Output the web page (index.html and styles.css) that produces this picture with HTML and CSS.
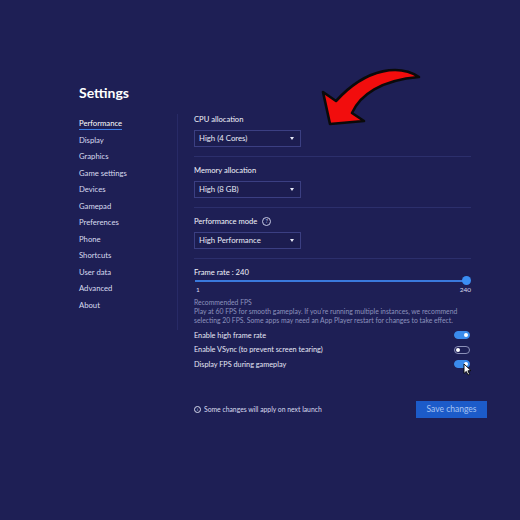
FILE: index.html
```html
<!DOCTYPE html>
<html lang="en">
<head>
    <meta charset="UTF-8">
    <meta name="viewport" content="width=device-width, initial-scale=1.0">
    <title>Settings</title>
    <link rel="stylesheet" href="styles.css">
</head>
<body>
    <div class="page">
        <h1 class="title">Settings</h1>

        <div class="layout">
            <ul class="sideMenu">
                <li><span class="active">Performance</span></li>
                <li>Display</li>
                <li>Graphics</li>
                <li>Game settings</li>
                <li>Devices</li>
                <li>Gamepad</li>
                <li>Preferences</li>
                <li>Phone</li>
                <li>Shortcuts</li>
                <li>User data</li>
                <li>Advanced</li>
                <li>About</li>
            </ul>

            <div class="main">
                <div class="panel">
                    <div class="section first">
                        <div class="label">CPU allocation</div>
                        <div class="select">High (4 Cores)<span class="caret"></span></div>
                    </div>
                    <div class="section">
                        <div class="label">Memory allocation</div>
                        <div class="select">High (8 GB)<span class="caret"></span></div>
                    </div>
                    <div class="section">
                        <div class="label">Performance mode <span class="help">?</span></div>
                        <div class="select">High Performance<span class="caret"></span></div>
                    </div>
                    <div class="section last">
                        <div class="label">Frame rate : 240</div>
                        <div class="slider">
                            <div class="sliderTrack"></div>
                            <div class="sliderThumb"></div>
                        </div>
                        <div class="sliderScale">
                            <span>1</span>
                            <span>240</span>
                        </div>
                        <div class="hintTitle">Recommended FPS</div>
                        <p class="hint">Play at 60 FPS for smooth gameplay. If you're running multiple instances, we recommend selecting 20 FPS. Some apps may need an App Player restart for changes to take effect.</p>

                        <div class="toggleRow">
                            <span>Enable high frame rate</span>
                            <span class="toggle on"></span>
                        </div>
                        <div class="toggleRow">
                            <span>Enable VSync (to prevent screen tearing)</span>
                            <span class="toggle"></span>
                        </div>
                        <div class="toggleRow">
                            <span>Display FPS during gameplay</span>
                            <span class="toggle on">
                                <svg class="cursor" width="9" height="13" viewBox="0 0 9 13">
                                    <path d="M1 1 L1 10.5 L3.3 8.4 L5 12 L6.6 11.3 L4.9 7.8 L8 7.6 Z" fill="#fff" stroke="#000" stroke-width="0.9" stroke-linejoin="round"/>
                                </svg>
                            </span>
                        </div>
                    </div>
                </div>

                <div class="footer">
                    <div class="note"><span class="infoIcon">i</span>Some changes will apply on next launch</div>
                    <button class="saveBtn">Save changes</button>
                </div>
            </div>
        </div>
    </div>

    <!-- red pointer drawn over the page -->
    <svg class="pointer" width="520" height="520" viewBox="0 0 520 520">
        <path d="M323 92 L330 124 L364 121 L352 113 C360 95 381 80 419 77 C401 65 368 66 336 101 Z"
              fill="#f20d0d" stroke="#0a0a0a" stroke-width="2.6" stroke-linejoin="round"/>
    </svg>
</body>
</html>
```

FILE: styles.css
```css
body {
    margin: 0;
    width: 520px;
    height: 520px;
    background-color: #1e1f55;
    font-family: "Lato", "Open Sans", sans-serif;
    color: #e6e8f5;
    overflow: hidden;
    position: relative;
}

.page {
    padding: 84px 0 0 79px;
}

.title {
    margin: 0 0 12px;
    font-size: 14px;
    line-height: 18px;
    font-weight: 700;
    color: #fff;
}

.layout {
    display: flex;
}

.sideMenu {
    list-style: none;
    margin: 0;
    padding: 1px 0 0;
    width: 98px;
    height: 215px;
    border-right: 1px solid #282a66;
}

.sideMenu li {
    font-size: 7.7px;
    line-height: 16.5px;
    color: #d8dbef;
}

.sideMenu .active {
    color: #fff;
    padding-bottom: 1px;
    border-bottom: 1px solid #3d7fe6;
}

.main {
    padding-left: 16px;
    width: 293px;
}

.panel {
    width: 277px;
}

.section {
    padding: 8px 0 9px;
    border-bottom: 1px solid #2c2f6c;
}

.section.first {
    padding-top: 0;
}

.section.last {
    border-bottom: none;
}

.label {
    font-size: 7.6px;
    line-height: 10px;
    color: #f2f3fa;
    display: flex;
    align-items: center;
    gap: 5px;
}

.help {
    width: 7px;
    height: 7px;
    border: 1px solid #c7cbe6;
    border-radius: 50%;
    font-size: 5.5px;
    line-height: 7px;
    text-align: center;
    color: #c7cbe6;
}

.select {
    margin-top: 6px;
    width: 101px;
    height: 15px;
    border: 1px solid #3b3f82;
    background-color: #1c1d50;
    font-size: 7.8px;
    line-height: 15px;
    padding-left: 4px;
    color: #e9ebf7;
    position: relative;
}

.caret {
    position: absolute;
    right: 6px;
    top: 6px;
    width: 0;
    height: 0;
    border-left: 2.5px solid transparent;
    border-right: 2.5px solid transparent;
    border-top: 3px solid #e9ebf7;
}

.slider {
    position: relative;
    height: 9px;
    margin: -1px 0 0 1px;
}

.sliderTrack {
    position: absolute;
    left: 0;
    right: 5px;
    top: 4px;
    height: 1.5px;
    background-color: #3a79dc;
}

.sliderThumb {
    position: absolute;
    right: 0;
    top: 0;
    width: 9px;
    height: 9px;
    border-radius: 50%;
    background-color: #3b8ef2;
}

.sliderScale {
    display: flex;
    justify-content: space-between;
    margin-top: 1px;
    font-size: 6.5px;
    line-height: 8px;
    color: #d8dbef;
    padding-left: 2px;
}

.hintTitle {
    margin-top: 4px;
    font-size: 6.8px;
    line-height: 9px;
    color: #8d92bd;
}

.hint {
    margin: 0 0 3px;
    font-size: 6.8px;
    line-height: 9px;
    color: #8d92bd;
}

.toggleRow {
    display: flex;
    justify-content: space-between;
    align-items: center;
    height: 14.5px;
    font-size: 7.3px;
    color: #e6e8f5;
}

.toggle {
    width: 14px;
    height: 6px;
    border: 1px solid #8c90b8;
    border-radius: 4px;
    margin-right: 1px;
    position: relative;
}

.toggle::after {
    content: "";
    position: absolute;
    left: 1px;
    top: 1px;
    width: 4px;
    height: 4px;
    border-radius: 50%;
    background-color: #fff;
}

.toggle.on {
    background-color: #3a8bec;
    border-color: #3a8bec;
}

.toggle.on::after {
    left: auto;
    right: 1px;
}

.cursor {
    position: absolute;
    left: 8px;
    top: 2px;
    z-index: 2;
}

.footer {
    margin-top: 20px;
    display: flex;
    justify-content: space-between;
    align-items: center;
}

.note {
    display: flex;
    align-items: center;
    gap: 3px;
    font-size: 6.8px;
    color: #d8dbef;
}

.infoIcon {
    width: 5px;
    height: 5px;
    border: 0.8px solid #d8dbef;
    border-radius: 50%;
    font-size: 4.5px;
    line-height: 5px;
    text-align: center;
}

.saveBtn {
    width: 71px;
    height: 17px;
    border: none;
    padding: 0;
    background-color: #1c5bc9;
    color: #a8c4f3;
    font-family: inherit;
    font-size: 8.5px;
}

.pointer {
    position: absolute;
    left: 0;
    top: 0;
    pointer-events: none;
}
```
